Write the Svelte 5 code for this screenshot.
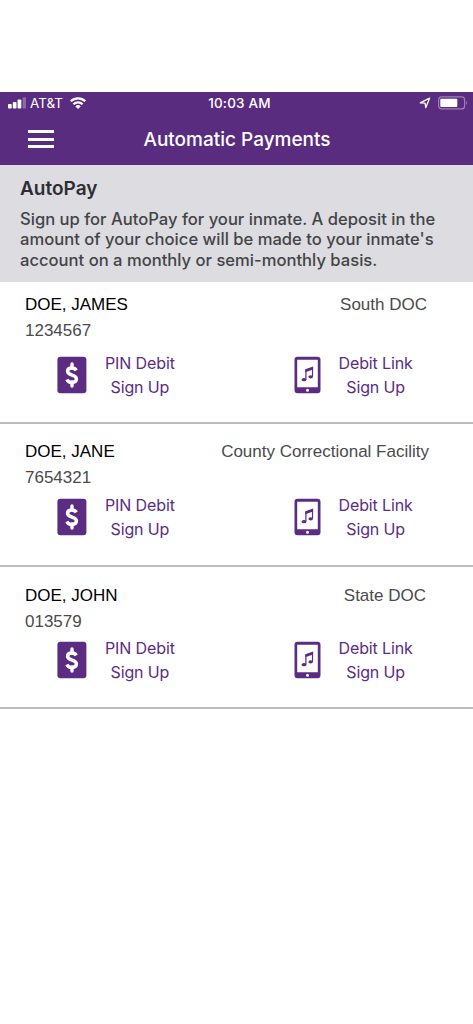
<script lang="ts">
    const inmates = [
        { name: 'DOE, JAMES', id: '1234567', facility: 'South DOC' },
        { name: 'DOE, JANE', id: '7654321', facility: 'County Correctional Facility' },
        { name: 'DOE, JOHN', id: '013579', facility: 'State DOC' },
    ];
</script>

<header>
    <div class="status-bar">
        <div class="carrier">
            <svg width="18" height="12" viewBox="0 0 18 12" fill="#fff" aria-hidden="true">
                <rect y="7" width="3.7" height="4.5" rx="0.8" />
                <rect x="4.8" y="5" width="3.7" height="6.5" rx="0.8" />
                <rect x="9.6" y="2.5" width="3.7" height="9" rx="0.8" />
                <rect x="14.6" y="0.2" width="3.4" height="11.3" rx="0.8" opacity="0.3" />
            </svg>
            <span>AT&amp;T</span>
            <svg class="wifi" width="16" height="12" viewBox="0 0 16 12" fill="none" stroke="#fff" stroke-width="2.2" aria-hidden="true">
                <path d="M0.8 4.3a10.3 10.3 0 0 1 14.4 0M3.4 7.2a6.5 6.5 0 0 1 9.2 0" />
                <path d="M8 12 5.3 9.4a3.8 3.8 0 0 1 5.4 0z" fill="#fff" stroke="none" />
            </svg>
        </div>
        <time>10:03 AM</time>
        <div class="indicators">
            <svg width="12" height="12" viewBox="0 0 12 12" fill="none" stroke="#fff" stroke-width="1.3" stroke-linejoin="round" aria-hidden="true">
                <path d="M1.2 5.9 10.6 1.2 6.8 10.6 6 6.2z" />
            </svg>
            <svg width="30" height="14" viewBox="0 0 30 14" aria-hidden="true">
                <rect x="0.6" y="0.9" width="26" height="12" rx="3" fill="none" stroke="#fff" stroke-opacity="0.4" stroke-width="1.2" />
                <rect x="2.3" y="2.7" width="17" height="8.4" rx="1" fill="#fff" />
                <path d="M28 4.8q1.8 2.1 0 4.2z" fill="#fff" opacity="0.45" />
            </svg>
        </div>
    </div>
    <div class="title-bar">
        <button class="menu" aria-label="Menu">
            <span></span>
            <span></span>
            <span></span>
        </button>
        <h1>Automatic Payments</h1>
    </div>
</header>

<section class="intro">
    <h2>AutoPay</h2>
    <p>
        Sign up for AutoPay for your inmate. A deposit in the<br />
        amount of your choice will be made to your inmate's<br />
        account on a monthly or semi-monthly basis.
    </p>
</section>

<ul>
    {#each inmates as inmate (inmate.id)}
        <li>
            <div class="person">
                <div>
                    <div class="name">{inmate.name}</div>
                    <div class="number">{inmate.id}</div>
                </div>
                <div class="facility">{inmate.facility}</div>
            </div>
            <div class="actions">
                <button class="pin">
                    <svg width="30" height="38" viewBox="0 0 30 38" aria-hidden="true">
                        <rect x="0.4" y="0.8" width="29" height="36.4" rx="3" fill="#5b2c82" />
                        <path d="M19.3 14.4C18.3 12.7 16.9 12 14.9 12c-2.7 0-4.3 1.3-4.3 3.3 0 4.7 8.8 3 8.8 7.5 0 2.3-1.7 3.6-4.5 3.6-2.4 0-4.1-1-5-2.9" fill="none" stroke="#fff" stroke-width="3.5" />
                        <path d="M15 8v4M15 26v4" stroke="#fff" stroke-width="3.4" stroke-linecap="round" />
                    </svg>
                    <span>PIN Debit<br />Sign Up</span>
                </button>
                <button class="link">
                    <svg width="27" height="38" viewBox="0 0 27 38" aria-hidden="true">
                        <path fill="#5b2c82" fill-rule="evenodd" d="M3.5 0.8h20a3 3 0 0 1 3 3v30.4a3 3 0 0 1-3 3h-20a3 3 0 0 1-3-3V3.8a3 3 0 0 1 3-3zM3.2 3.8v27.5h20.600V3.8z" />
                        <circle cx="13.5" cy="34.3" r="1.5" fill="#fff" />
                        <path d="M11.9 23.5V13.7M18.500 20.5v-9" stroke="#5b2c82" stroke-width="1.2" />
                        <path d="M11.3 13.2l7.8-2.8v3.1l-7.800 2.8z" fill="#5b2c82" />
                        <ellipse cx="10" cy="23.7" rx="2.4" ry="1.6" fill="#5b2c82" />
                        <ellipse cx="16.7" cy="20.8" rx="2.3" ry="1.6" fill="#5b2c82" />
                    </svg>
                    <span>Debit Link<br />Sign Up</span>
                </button>
            </div>
        </li>
    {/each}
</ul>

<style>
    :global(body) {
        background: #fff;
        font-family: Inter, 'Liberation Sans', sans-serif;
    }

    :global(#app) {
        padding-top: 91.5px;
    }

    header {
        height: 73px;
        background: #5a2c80;
        color: #fff;
    }

    .status-bar {
        display: grid;
        grid-template-columns: 1fr auto 1fr;
        align-items: center;
        height: 23px;
        padding: 0 5px 0 8px;
        font-size: 13.5px;
    }

    .carrier,
    .indicators {
        display: flex;
        align-items: center;
    }

    .carrier {
        gap: 4px;
    }

    .wifi {
        margin-left: 3px;
    }

    time {
        font-weight: 500;
        letter-spacing: 0.2px;
        padding-left: 3px;
    }

    .indicators {
        justify-content: flex-end;
        gap: 7px;
    }

    .title-bar {
        display: grid;
        grid-template-columns: 1fr auto 1fr;
        align-items: center;
        height: 49px;
        padding: 0 27px 0 28px;
    }

    button {
        border: 0;
        padding: 0;
        background: none;
        font: inherit;
        cursor: pointer;
    }

    .menu {
        display: flex;
        flex-direction: column;
        gap: 4.2px;
        width: 26px;
    }

    .menu span {
        height: 3px;
        background: #fff;
    }

    h1 {
        margin: 1px 0 0;
        font-size: 19px;
        font-weight: 500;
        line-height: 24px;
    }

    .intro {
        box-sizing: border-box;
        height: 117px;
        padding: 11px 20px 0;
        background: #dcdce1;
    }

    h2 {
        margin: 0;
        color: #2c2e31;
        font-size: 19px;
        font-weight: 600;
        line-height: 25px;
    }

    p {
        margin: 8px 0 0;
        color: #434446;
        font-size: 16.6px;
        font-weight: 500;
        line-height: 20.5px;
        white-space: nowrap;
    }

    ul {
        margin: 0;
        padding: 0;
        list-style: none;
    }

    li {
        box-sizing: border-box;
        height: 142.5px;
        border-bottom: 2px solid #bcbbc1;
    }

    .person {
        box-sizing: border-box;
        display: flex;
        justify-content: space-between;
        height: 69px;
        padding: 10.5px 46px 0 25px;
        color: #4a4a4c;
        font-family: 'Liberation Sans', sans-serif;
        font-size: 17px;
        line-height: 25.5px;
    }

    li:nth-child(2) .person {
        padding: 15px 44px 0 25px;
    }

    li:nth-child(3) .person {
        padding: 16.5px 47px 0 25px;
    }

    .name {
        color: #000;
    }

    .actions {
        display: flex;
        padding-left: 57px;
    }

    .actions button {
        display: flex;
        align-items: center;
        color: #5b2c82;
        font-size: 16px;
        letter-spacing: -0.12px;
        line-height: 24px;
        white-space: nowrap;
    }

    .pin {
        gap: 18px;
        width: 237px;
    }

    .link {
        gap: 17.5px;
    }
</style>
